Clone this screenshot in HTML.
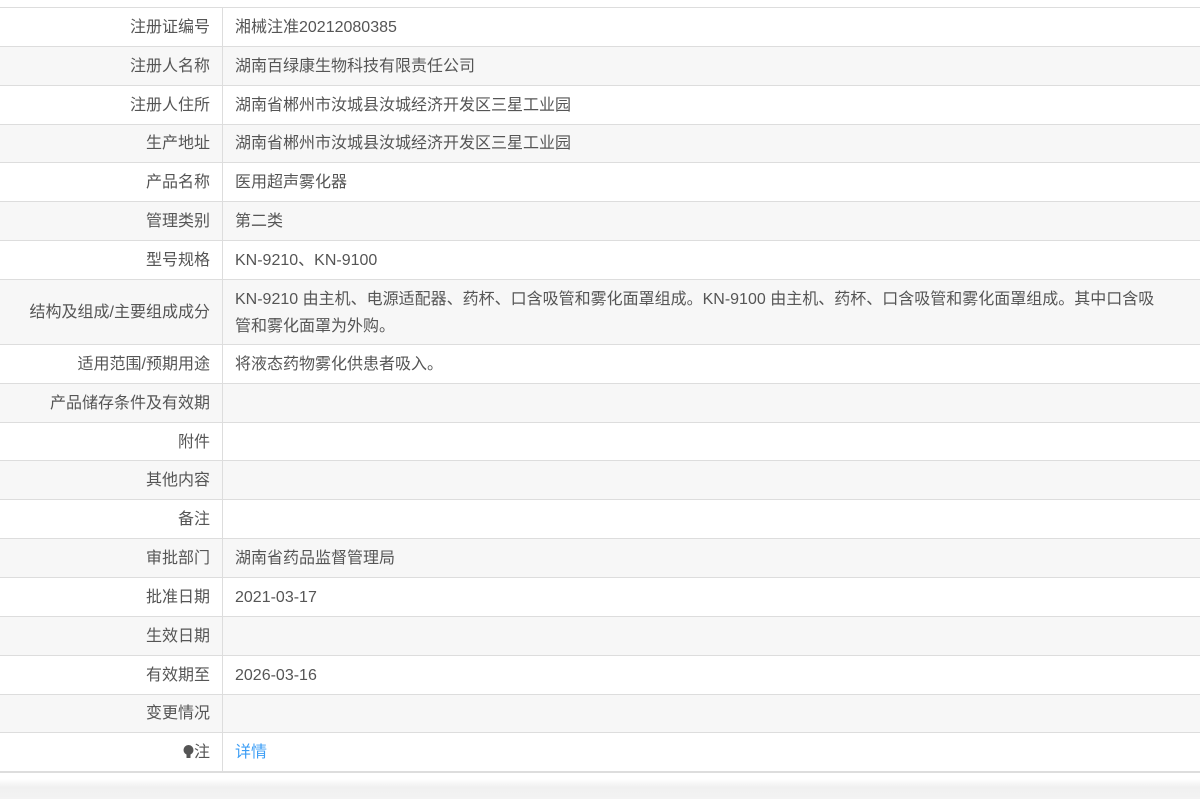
<!DOCTYPE html>
<html><head><meta charset="utf-8"><style>
body{margin:0;background:#fff;font-family:"Liberation Sans","Noto Sans CJK SC",sans-serif;font-size:16px;color:#555;width:1200px;height:799px;overflow:hidden;position:relative}
table{position:absolute;top:7px;left:0;width:1200px;border-collapse:collapse;border-top:1px solid #ddd;border-bottom:2px solid #ddd}
td{border-bottom:1px solid #ddd;height:35.85px;padding:2px 12px 0 12px;vertical-align:middle;line-height:24px}
td.l{width:198px;text-align:right;border-right:1px solid #ddd}
tr:nth-child(even) td{background:#f7f7f7}
.tall td{height:62px;line-height:27px}
a{color:#3d9ef5;text-decoration:none}
.sh{position:absolute;left:0;top:779px;width:1200px;height:20px;background:linear-gradient(#fff,#f0f0f0 40%,#f3f3f3)}
</style></head><body>
<table>
<tr><td class="l">注册证编号</td><td>湘械注准20212080385</td></tr>
<tr><td class="l">注册人名称</td><td>湖南百绿康生物科技有限责任公司</td></tr>
<tr><td class="l">注册人住所</td><td>湖南省郴州市汝城县汝城经济开发区三星工业园</td></tr>
<tr><td class="l">生产地址</td><td>湖南省郴州市汝城县汝城经济开发区三星工业园</td></tr>
<tr><td class="l">产品名称</td><td>医用超声雾化器</td></tr>
<tr><td class="l">管理类别</td><td>第二类</td></tr>
<tr><td class="l">型号规格</td><td>KN-9210、KN-9100</td></tr>
<tr class="tall"><td class="l">结构及组成/主要组成成分</td><td>KN-9210 由主机、电源适配器、药杯、口含吸管和雾化面罩组成。KN-9100 由主机、药杯、口含吸管和雾化面罩组成。其中口含吸<br>管和雾化面罩为外购。</td></tr>
<tr><td class="l">适用范围/预期用途</td><td>将液态药物雾化供患者吸入。</td></tr>
<tr><td class="l">产品储存条件及有效期</td><td></td></tr>
<tr><td class="l">附件</td><td></td></tr>
<tr><td class="l">其他内容</td><td></td></tr>
<tr><td class="l">备注</td><td></td></tr>
<tr><td class="l">审批部门</td><td>湖南省药品监督管理局</td></tr>
<tr><td class="l">批准日期</td><td>2021-03-17</td></tr>
<tr><td class="l">生效日期</td><td></td></tr>
<tr><td class="l">有效期至</td><td>2026-03-16</td></tr>
<tr><td class="l">变更情况</td><td></td></tr>
<tr><td class="l"><svg width="11" height="14" viewBox="0 0 11 14" style="vertical-align:-2px"><circle cx="5.5" cy="5" r="5" fill="#555"/><rect x="3.5" y="9" width="4" height="4" fill="#555"/></svg>注</td><td><a>详情</a></td></tr>
</table>
<div class="sh"></div>
</body></html>
